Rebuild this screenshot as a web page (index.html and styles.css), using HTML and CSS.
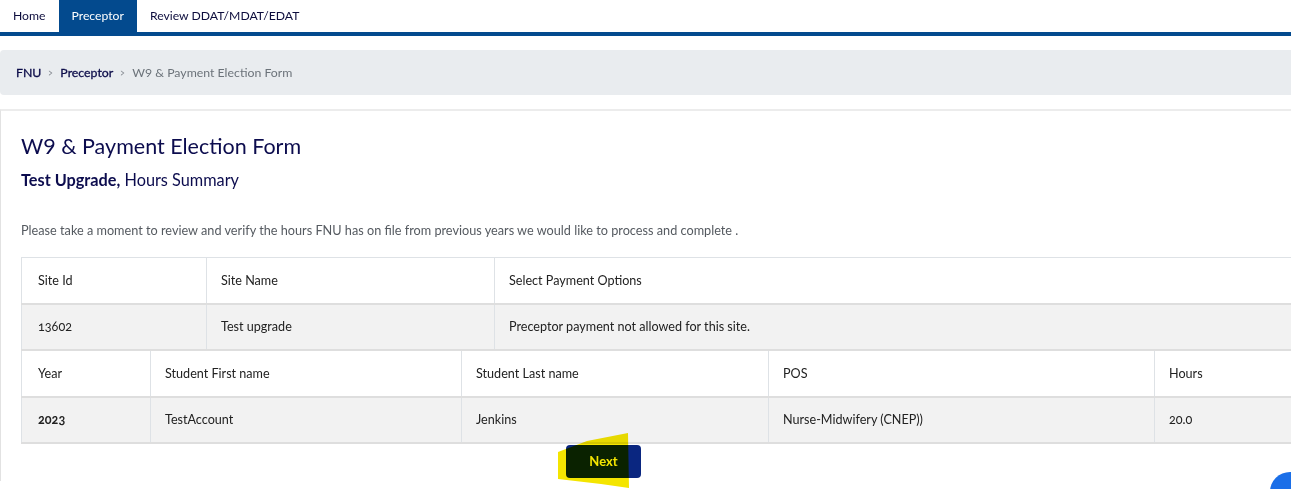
FILE: index.html
```
<!DOCTYPE html>
<html lang="en">
   <head>
      <meta charset="UTF-8">
      <title>W9 &amp; Payment Election Form</title>
      <link rel="stylesheet" href="styles.css">
   </head>
   <body>
      <div class="topnav">
         <a class="tab">Home</a>
         <a class="tab active">Preceptor</a>
         <a class="tab">Review DDAT/MDAT/EDAT</a>
      </div>
      <div class="crumbs">
         <a>FNU</a>
         <span class="sep">&gt;</span>
         <a>Preceptor</a>
         <span class="sep">&gt;</span>
         <span class="current">W9 &amp; Payment Election Form</span>
      </div>
      <div class="card">
         <h1>W9 &amp; Payment Election Form</h1>
         <h2><b>Test Upgrade,</b> Hours Summary</h2>
         <p class="intro">Please take a moment to review and verify the hours FNU has on file from previous years we would like to process and complete .</p>
         <table class="grid site">
            <tr class="head">
               <td class="c1">Site Id</td>
               <td class="c2">Site Name</td>
               <td>Select Payment Options</td>
            </tr>
            <tr class="data">
               <td class="num">13602</td>
               <td>Test upgrade</td>
               <td>Preceptor payment not allowed for this site.</td>
            </tr>
         </table>
         <table class="grid hours">
            <tr class="head">
               <td class="d1">Year</td>
               <td class="d2">Student First name</td>
               <td class="d3">Student Last name</td>
               <td class="d4">POS</td>
               <td>Hours</td>
            </tr>
            <tr class="data">
               <td class="num strong">2023</td>
               <td>TestAccount</td>
               <td>Jenkins</td>
               <td>Nurse-Midwifery (CNEP))</td>
               <td class="num">20.0</td>
            </tr>
         </table>
         <div class="actions">
            <button class="next">Next</button>
            <svg class="marker" width="80" height="60" viewBox="0 0 80 60"><polygon points="1,20 30,9 71,1 72,56 44,52 1,47" fill="#f4e500"/></svg>
         </div>
      </div>
      <div class="chat"></div>
   </body>
</html>
```
FILE: styles.css
```
html,body{
   margin:0;
   padding:0;
   background:#fff;
   overflow:hidden;
}
body{
   font-family:Lato, "Open Sans", sans-serif;
   font-size:13px;
   color:#1a1a40;
   width:1291px;
   height:489px;
   position:relative;
}
.topnav{
   display:flex;
   height:32px;
   border-bottom:4px solid #034a8e;
}
.tab{
   padding:0 13px;
   line-height:32px;
   color:#0d0d3d;
   font-size:12.2px;
}
.tab.active{
   background:#034a8e;
   color:#fff;
}
.crumbs{
   margin-top:14px;
   height:45px;
   background:#e9ecef;
   border-radius:4px 0 0 4px;
   display:flex;
   align-items:center;
   padding-left:16px;
   gap:6px;
   font-size:12.3px;
}
.crumbs a{
   color:#0d0d4a;
   -webkit-text-stroke:0.3px #0d0d4a;
}
.crumbs .sep{
   color:#8a8f96;
   font-size:12px;
   transform:scaleX(0.7);
}
.crumbs .current{
   color:#6c737a;
}
.card{
   margin-top:14px;
   width:1330px;
   height:372px;
   border-top:2px solid #ececec;
   border-left:1px solid #e2e2e2;
   padding:0 0 0 20px;
   box-sizing:border-box;
}
h1{
   margin:21px 0 0;
   font-size:21.5px;
   font-weight:normal;
   color:#0c0c4e;
   line-height:28px;
}
h2{
   margin:9px 0 0;
   font-size:16.3px;
   font-weight:normal;
   color:#0c0c4e;
   line-height:22px;
}
h2 b{
   font-weight:bold;
}
.intro{
   margin:31px 0 0;
   font-size:12.7px;
   color:#555a60;
   line-height:16px;
}
.grid{
   width:1310px;
   border-collapse:collapse;
   table-layout:fixed;
   color:#222;
   font-size:12.6px;
}
.site{
   margin-top:19px;
   border-top:1px solid #dee2e6;
}
.grid td{
   height:46px;
   padding:0 14px;
   border-left:1px solid #dee2e6;
   border-bottom:2px solid #dedede;
   box-sizing:border-box;
}
.grid td:first-child{
   padding-left:16px;
}
.head td{
   background:#fff;
}
.data td{
   background:#f2f2f2;
}
.num{
   font-variant-numeric:oldstyle-nums;
}
.strong{
   font-weight:bold;
}
.c1{ width:185px; }
.c2{ width:288px; }
.d1{ width:129px; }
.d2{ width:311px; }
.d3{ width:307px; }
.d4{ width:386px; }
.actions{
   position:relative;
   padding-left:545px;
   padding-top:1px;
}
.next{
   position:relative;
   z-index:1;
   width:75px;
   height:33px;
   border:none;
   border-radius:4px;
   background:#0a2680;
   color:#fff;
   font-family:Lato, sans-serif;
   font-weight:bold;
   font-size:13px;
}
.marker{
   position:absolute;
   left:536px;
   top:-12px;
   z-index:2;
   mix-blend-mode:multiply;
}
.chat{
   position:absolute;
   left:1270px;
   top:472px;
   width:40px;
   height:40px;
   border-radius:50%;
   background:#1b6fe8;
}
```
